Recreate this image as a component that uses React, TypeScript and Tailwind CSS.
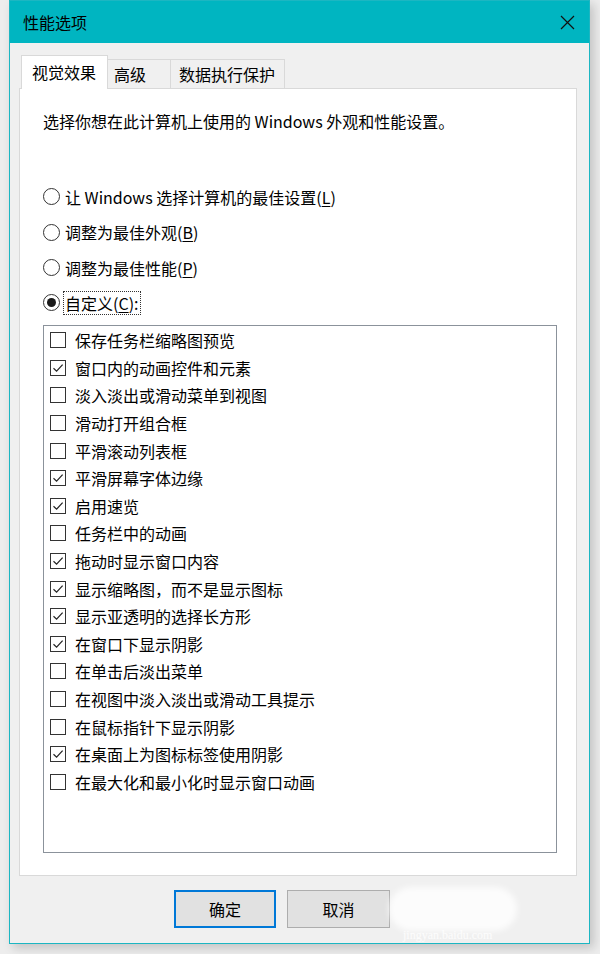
import React from 'react'

const font = { fontFamily: '"Noto Sans CJK SC", "Noto Sans", sans-serif' }

const options = [
  { label: '让 Windows 选择计算机的最佳设置', key: 'L' },
  { label: '调整为最佳外观', key: 'B' },
  { label: '调整为最佳性能', key: 'P' },
]

const effects: [string, boolean][] = [
  ['保存任务栏缩略图预览', false],
  ['窗口内的动画控件和元素', true],
  ['淡入淡出或滑动菜单到视图', false],
  ['滑动打开组合框', false],
  ['平滑滚动列表框', false],
  ['平滑屏幕字体边缘', true],
  ['启用速览', true],
  ['任务栏中的动画', false],
  ['拖动时显示窗口内容', true],
  ['显示缩略图，而不是显示图标', true],
  ['显示亚透明的选择长方形', true],
  ['在窗口下显示阴影', true],
  ['在单击后淡出菜单', false],
  ['在视图中淡入淡出或滑动工具提示', false],
  ['在鼠标指针下显示阴影', false],
  ['在桌面上为图标标签使用阴影', true],
  ['在最大化和最小化时显示窗口动画', false],
]

function Radio({ checked }: { checked?: boolean }) {
  return (
    <span className="w-[17px] h-[17px] rounded-full border border-[#333] bg-white flex items-center justify-center shrink-0">
      {checked && <span className="w-[9px] h-[9px] rounded-full bg-[#1a1a1a]" />}
    </span>
  )
}

function Check({ checked }: { checked: boolean }) {
  return (
    <span className="w-[16px] h-[16px] border border-[#333] bg-white flex items-center justify-center shrink-0">
      {checked && (
        <svg width="12" height="12" viewBox="0 0 12 12" fill="none">
          <path d="M1.5 6.2 L4.6 9.2 L10.6 2.6" stroke="#222" strokeWidth="1.2" />
        </svg>
      )}
    </span>
  )
}

export default function App() {
  return (
    <div className="w-[600px] h-[954px] bg-[#ededed] text-black text-[16px] leading-none" style={font}>
      <div className="relative ml-[9px] w-[581px] h-[944px] border border-[#1cb6c2] flex flex-col shadow-[4px_4px_10px_rgba(0,0,0,0.18)]">
        {/* title bar */}
        <div className="h-[42px] bg-[#00b5c1] flex items-center justify-between pl-[13px] pr-[14px] shrink-0">
          <span className="text-[16px]">性能选项</span>
          <svg width="15" height="15" viewBox="0 0 15 15">
            <path d="M1 1 L14 14 M14 1 L1 14" stroke="#111" strokeWidth="1.2" />
          </svg>
        </div>

        <div className="flex-1 bg-[#f0f0f0] flex flex-col pl-[9px] pr-[12px] pt-[12px]">
          {/* tabs */}
          <div className="flex items-end h-[34px] ml-[2px] relative z-10">
            <div className="w-[87px] h-[34px] bg-white border border-b-0 border-[#d9d9d9] pl-[10px] pt-[8px]">视觉效果</div>
            <div className="w-[63px] h-[29px] border-t border-r border-[#d9d9d9] pl-[6px] pt-[6px] mb-[1px]">高级</div>
            <div className="w-[114px] h-[29px] border-t border-r border-[#d9d9d9] pl-[8px] pt-[6px] mb-[1px]">数据执行保护</div>
          </div>

          {/* panel */}
          <div className="-mt-[1px] h-[788px] bg-white border border-[#d9d9d9] flex flex-col pl-[23px] pr-[19px]">
            <p className="mt-[22px] h-[20px] leading-[20px]">选择你想在此计算机上使用的 Windows 外观和性能设置。</p>

            <div className="mt-[48px] flex flex-col">
              {options.map((o) => (
                <div key={o.key} className="h-[35.5px] flex items-center gap-[5px]">
                  <Radio />
                  <span>
                    {o.label}(<span className="underline underline-offset-2">{o.key}</span>)
                  </span>
                </div>
              ))}
              <div className="h-[34px] flex items-center gap-[3px]">
                <Radio checked />
                <span className="border border-dotted border-[#333] px-[1px] py-[3px]">
                  自定义(<span className="underline underline-offset-2">C</span>):
                </span>
              </div>
            </div>

            <div className="mt-[5px] h-[528px] border border-[#8b929b] pt-[1px] flex flex-col">
              {effects.map(([label, on]) => (
                <div key={label} className="h-[27.6px] flex items-center pl-[6px] gap-[9px]">
                  <Check checked={on} />
                  <span>{label}</span>
                </div>
              ))}
            </div>
          </div>

          {/* buttons */}
          <div className="mt-[14px] flex gap-[11px] pl-[155px]">
            <button className="w-[102px] h-[38px] bg-[#e1e1e1] border-2 border-[#0078d7] text-[16px]">确定</button>
            <button className="w-[103px] h-[38px] bg-[#e1e1e1] border border-[#adadad] text-[16px]">取消</button>
          </div>
        </div>

        {/* watermark */}
        <div className="absolute left-[379px] top-[886px] w-[128px] h-[44px] rounded-[22px] bg-white/80 blur-[3px]" />
        <span className="absolute left-[393px] top-[928px] text-[12px] text-white/80" style={{ fontFamily: '"Liberation Serif", serif' }}>
          jingyan.baidu.com
        </span>
      </div>
    </div>
  )
}
